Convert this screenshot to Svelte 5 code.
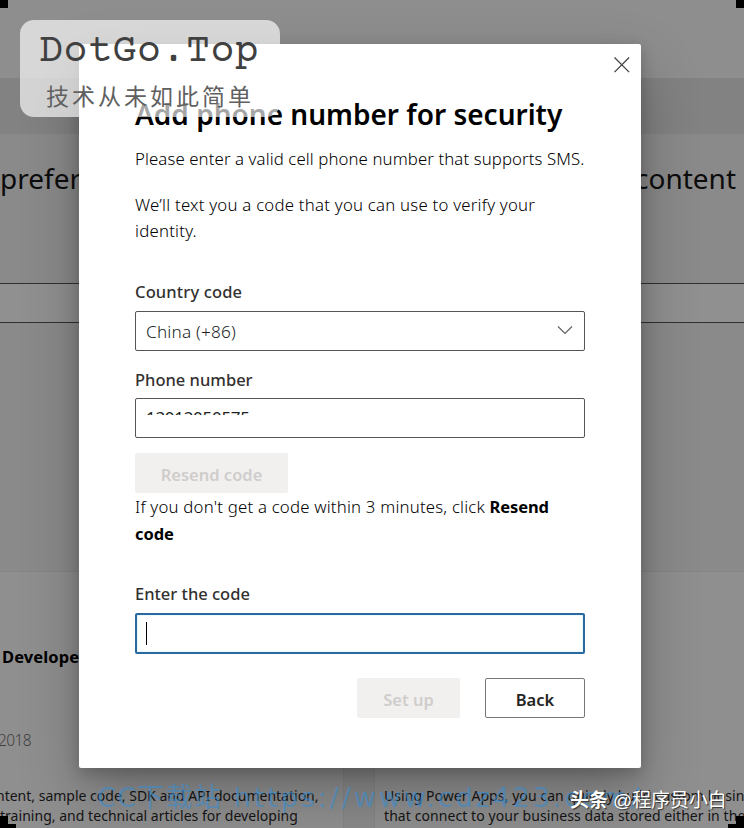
<script>
    let country = 'China (+86)';
    let phone = '13012050575';

    const cards = [
        {
            title: 'Develope',
            year: '2018',
            lines: ['ntent, sample code, SDK and API documentation,', 'training, and technical articles for developing']
        },
        {
            title: '',
            year: '',
            lines: ['Using Power Apps, you can quickly build custom busin', 'that connect to your business data stored either in the']
        }
    ];
</script>

<div class="screen">
    <div class="page">
        <div class="top"></div>
        <div class="band"></div>
        <div class="intro">
            <span class="left">prefer</span>
            <span class="right">content</span>
        </div>
        <div class="field-row"></div>
        <div class="space"></div>
        <div class="cards">
            {#each cards as card}
                <div class="card">
                    <h4>{card.title}</h4>
                    <div class="year">{card.year}</div>
                    {#each card.lines as line, i}
                        <p class="line{i + 1}">{line}</p>
                    {/each}
                </div>
            {/each}
        </div>
    </div>

    <div class="modal">
        <button class="close" aria-label="Close">
            <svg width="16" height="16" viewBox="0 0 16 16"><path d="M.5.5l14.6 14.6M15.1.5L.5 15.1" /></svg>
        </button>
        <h2>Add phone number for security</h2>
        <p class="valid">Please enter a valid cell phone number that supports SMS.</p>
        <p class="verify">We’ll text you a code that you can use to verify your<br />identity.</p>

        <div class="label country">Country code</div>
        <div class="input select">
            <span>{country}</span>
            <svg width="16" height="9" viewBox="0 0 16 9"><path d="M1 .5l7 7L15 .5" /></svg>
        </div>

        <div class="label phone">Phone number</div>
        <div class="input"><span class="number">{phone}</span></div>

        <button class="disabled resend">Resend code</button>
        <p class="hint">If you don't get a code within 3 minutes, click <b>Resend<br />code</b></p>

        <div class="label code">Enter the code</div>
        <div class="input focused"><i class="caret"></i></div>

        <div class="actions">
            <button class="disabled setup">Set up</button>
            <button class="back">Back</button>
        </div>
    </div>

    <div class="badge">
        <div class="brand">DotGo.Top</div>
        <div class="slogan">技术从未如此简单</div>
    </div>
    <div class="link"><span>CC下载站</span> https://www.cdz423.com/</div>
    <div class="author"><b>头条</b> @程序员小白</div>
    <i class="corner tl"></i>
    <i class="corner tr"></i>
    <i class="corner bl"></i>
    <i class="corner br"></i>
</div>

<style>
    :global(body) {
        margin: 0;
    }

    .screen {
        position: relative;
        width: 744px;
        height: 828px;
        overflow: hidden;
        font-family: "Noto Sans", "Noto Sans CJK SC", sans-serif;
        color: #111;
    }

    .page {
        background: #8a8a8a;
        height: 828px;
    }

    .top {
        height: 78px;
        background: #8e8e8e;
    }

    .band {
        height: 56px;
        background: #828282;
    }

    .intro {
        height: 149px;
        display: flex;
        justify-content: space-between;
        box-sizing: border-box;
        padding: 23px 8px 0 0;
        font-size: 28px;
        line-height: 42px;
        color: #0c0c0c;
    }

    .field-row {
        height: 38px;
        border-top: 1px solid #303030;
        border-bottom: 1px solid #303030;
        background: #909090;
    }

    .space {
        height: 248px;
        border-bottom: 1px solid #808080;
    }

    .cards {
        display: flex;
        gap: 32px;
        height: 256px;
        background: #8a8a8a;
    }

    .card {
        width: 343px;
        flex: none;
        background: #8f8f8f;
        box-shadow: 0 0 0 1px #858585;
        white-space: nowrap;
    }

    .card:last-child {
        width: 369px;
    }

    .card h4 {
        margin: 72px 0 0 2px;
        height: 26px;
        font-size: 16.5px;
        line-height: 26px;
        letter-spacing: 0.1px;
        color: #000;
    }

    .year {
        height: 24px;
        margin: 58px 0 34px -2px;
        font-size: 15.5px;
        font-weight: 300;
        line-height: 24px;
        letter-spacing: -0.6px;
        color: #404040;
    }

    .card p {
        margin: 0;
        font-size: 14px;
        line-height: 20px;
        color: #141414;
    }

    .card .line1 {
        margin-left: -4px;
    }

    .card .line2 {
        letter-spacing: 0.03px;
    }

    .card:last-child p {
        margin-left: 9px;
        letter-spacing: 0.08px;
    }

    .modal {
        position: absolute;
        left: 79px;
        top: 44px;
        width: 562px;
        height: 724px;
        box-sizing: border-box;
        padding: 49px 56px 0;
        background: #fff;
        border-radius: 2px;
        box-shadow: 0 25.6px 57.6px rgba(0, 0, 0, 0.26), 0 4.8px 14.4px rgba(0, 0, 0, 0.2);
    }

    .modal h2 {
        margin: 0;
        font-size: 28px;
        font-weight: 600;
        line-height: 42px;
        color: #000;
        white-space: nowrap;
    }

    .modal p {
        margin: 0;
        font-size: 16.8px;
        font-weight: 300;
        line-height: 26px;
        letter-spacing: 0.1px;
        color: #000;
        white-space: nowrap;
    }

    .modal .valid {
        margin-top: 11px;
    }

    .modal .verify {
        margin-top: 20px;
        letter-spacing: 0.23px;
    }

    .modal .hint {
        line-height: 27px;
        letter-spacing: 0.2px;
    }

    .hint b {
        font-size: 16.5px;
        font-weight: 700;
        letter-spacing: -0.1px;
    }

    .label {
        font-size: 16.5px;
        font-weight: 500;
        line-height: 26px;
        letter-spacing: 0.15px;
        color: #323130;
    }

    .country {
        margin: 35px 0 6px;
    }

    .phone {
        margin: 16px 0 5px;
        letter-spacing: 0;
    }

    .code {
        margin: 34px 0 6px;
        letter-spacing: 0;
    }

    .input {
        display: flex;
        align-items: center;
        justify-content: space-between;
        box-sizing: border-box;
        height: 40px;
        padding: 0 11px 0 10px;
        border: 1px solid #555;
        border-radius: 2px;
        font-size: 17.2px;
        font-weight: 300;
        letter-spacing: 0.2px;
        color: #201f1e;
    }

    .select svg {
        margin-top: -1px;
        fill: none;
        stroke: #605e5c;
        stroke-width: 1.1;
    }

    /* only the tops of the digits stay visible */
    .number {
        height: 4px;
        overflow: hidden;
        font-size: 17px;
        font-weight: 400;
        line-height: 14px;
        margin-top: -10px;
        letter-spacing: -0.3px;
    }

    .focused {
        height: 41px;
        border: 2px solid #2b689d;
        padding-left: 9px;
        box-shadow: inset 0 0 2px #aeeaff;
    }

    .caret {
        width: 1px;
        height: 23px;
        background: #000;
    }

    button {
        box-sizing: border-box;
        height: 40px;
        padding: 2px 0 0;
        font-family: inherit;
        font-size: 16.5px;
        font-weight: 600;
        border-radius: 2px;
        white-space: nowrap;
    }

    .disabled {
        display: block;
        border: none;
        background: #f1f0ef;
        color: #cfcdcb;
    }

    .resend {
        width: 153px;
        margin-top: 15px;
    }

    .actions {
        display: flex;
        justify-content: flex-end;
        gap: 25px;
        margin-top: 24px;
    }

    .setup {
        width: 103px;
    }

    .back {
        width: 100px;
        border: 1px solid #777;
        background: #fff;
        color: #252423;
    }

    .close {
        position: absolute;
        top: 13px;
        right: 11px;
        width: 16px;
        height: 16px;
        padding: 0;
        border: none;
        background: none;
    }

    .close svg {
        display: block;
        fill: none;
        stroke: #444;
        stroke-width: 1.3;
    }

    .badge {
        position: absolute;
        left: 20px;
        top: 20px;
        width: 260px;
        height: 97px;
        border-radius: 14px;
        background: rgba(255, 255, 255, 0.65);
        white-space: nowrap;
    }

    .brand {
        margin: 11px 0 0 19px;
        font-family: "Courier Prime", "Nimbus Mono PS", "Liberation Serif", serif;
        font-size: 40px;
        line-height: 44px;
        letter-spacing: 0.5px;
        color: #404040;
    }

    .slogan {
        margin: 3px 0 0 26px;
        font-family: "Noto Sans CJK SC", sans-serif;
        font-size: 23px;
        line-height: 34px;
        letter-spacing: 3px;
        color: #606060;
    }

    .link {
        position: absolute;
        left: 97px;
        top: 780px;
        font-family: "DejaVu Sans", "Noto Sans CJK SC", sans-serif;
        font-size: 27px;
        line-height: 36px;
        letter-spacing: 2.9px;
        color: rgba(60, 140, 205, 0.62);
        white-space: nowrap;
    }

    .link span {
        letter-spacing: 1.3px;
    }

    .author {
        position: absolute;
        left: 570px;
        top: 788px;
        font-family: "Liberation Sans", "Noto Sans CJK SC", sans-serif;
        font-size: 18.9px;
        line-height: 26px;
        color: #fff;
        text-shadow: 1px 1px 1px #333;
        white-space: nowrap;
    }

    .corner {
        position: absolute;
        width: 8px;
        height: 8px;
        background: #000;
    }

    .tl {
        left: 0;
        top: 0;
    }

    .tr {
        right: 0;
        top: 0;
    }

    .bl {
        left: 0;
        bottom: 0;
        width: 16px;
        height: 12px;
        clip-path: polygon(0 0, 50% 0, 50% 66%, 100% 66%, 100% 100%, 0 100%);
    }

    .br {
        right: 0;
        bottom: 0;
        width: 16px;
        height: 12px;
        clip-path: polygon(50% 0, 100% 0, 100% 100%, 0 100%, 0 66%, 50% 66%);
    }
</style>
